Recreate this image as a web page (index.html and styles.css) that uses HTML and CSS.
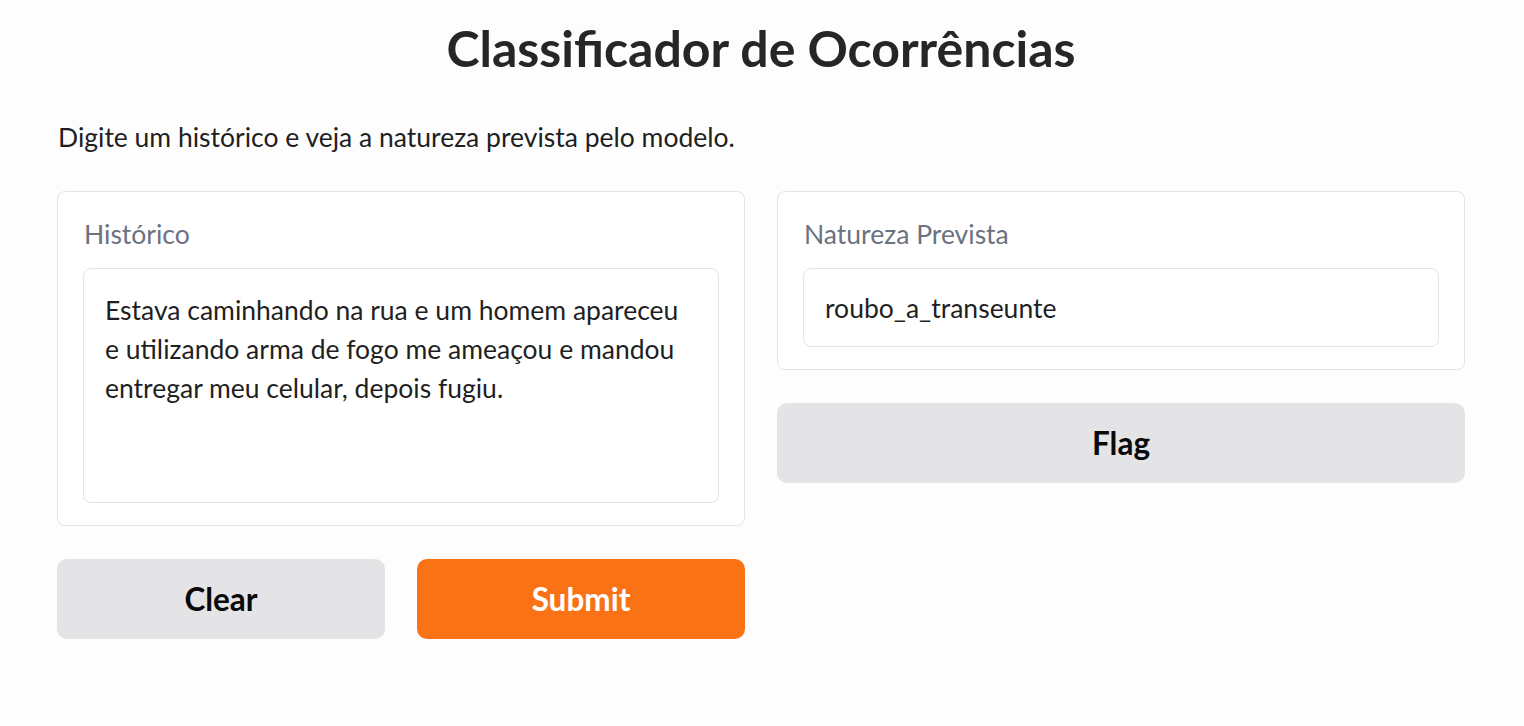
FILE: index.html
```html
<!DOCTYPE html>
<html lang="pt">
<head>
<meta charset="utf-8">
<title>Classificador de Ocorrências</title>
<link rel="stylesheet" href="styles.css">
</head>
<body>
<main class="app">
  <h1 class="title">Classificador de Ocorrências</h1>
  <p class="desc">Digite um histórico e veja a natureza prevista pelo modelo.</p>
  <div class="cols">
    <div class="col">
      <div class="panel">
        <label class="label">Histórico</label>
        <div class="textarea">Estava caminhando na rua e um homem apareceu e utilizando arma de fogo me ameaçou e mandou entregar meu celular, depois fugiu.</div>
      </div>
      <div class="btn-row">
        <button class="btn secondary">Clear</button>
        <button class="btn primary">Submit</button>
      </div>
    </div>
    <div class="col">
      <div class="panel">
        <label class="label">Natureza Prevista</label>
        <div class="output">roubo_a_transeunte</div>
      </div>
      <button class="btn secondary">Flag</button>
    </div>
  </div>
</main>
</body>
</html>
```

FILE: styles.css
```css
* { box-sizing: border-box; }
html, body { margin: 0; padding: 0; }
body {
  background: #fdfdfd;
  font-family: Lato, "Noto Sans", sans-serif;
  color: #1f1f1f;
  width: 1524px;
  height: 726px;
  overflow: hidden;
}
.app {
  padding: 0 59px 0 57px;
}
.title {
  margin: 0;
  padding-top: 20px;
  height: 117px;
  text-align: center;
  font-size: 50px;
  font-weight: 700;
  color: #262626;
  line-height: 56px;
}
.desc {
  margin: 0;
  padding-left: 1px;
  font-size: 26.5px;
  line-height: 40px;
  height: 74px;
  color: #1f1f1f;
}
.cols {
  display: grid;
  grid-template-columns: 688px 688px;
  column-gap: 32px;
  align-items: start;
}
.col {
  display: flex;
  flex-direction: column;
  gap: 33px;
}
.panel {
  background: #fff;
  border: 1.5px solid #e4e4e7;
  border-radius: 8px;
  padding: 26px 25px 21.5px 25px;
  display: flex;
  flex-direction: column;
  gap: 18px;
}
.label {
  font-size: 26.5px;
  line-height: 32px;
  color: #6b7280;
  padding-left: 1px;
}
.textarea, .output {
  border: 1.5px solid #e4e4e7;
  border-radius: 8px;
  background: #fff;
  font-size: 26.5px;
  color: #1f1f1f;
  padding: 0 21px;
}
.textarea {
  height: 235px;
  padding-top: 22px;
  line-height: 39px;
}
.output {
  height: 79px;
  display: flex;
  align-items: center;
}
.btn-row {
  display: flex;
  gap: 32px;
}
.btn {
  border: 0;
  border-radius: 10px;
  height: 80px;
  font-family: inherit;
  font-weight: 700;
  font-size: 31.5px;
  cursor: pointer;
}
.btn-row .btn { flex: 1; }
.secondary { background: #e4e4e7; color: #0a0a0a; }
.primary { background: #f97316; color: #fff; }
```
